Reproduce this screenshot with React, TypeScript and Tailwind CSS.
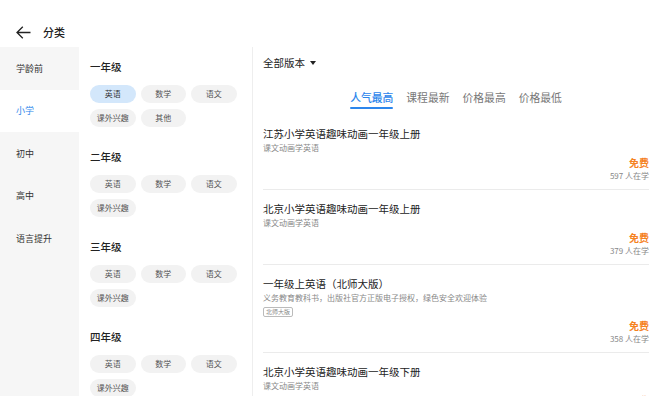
import React from "react";

const font = { fontFamily: '"Noto Sans CJK SC", "Noto Sans", sans-serif' };

const stages = ["学龄前", "小学", "初中", "高中", "语言提升"];

const grades = [
  { name: "一年级", subjects: ["英语", "数学", "语文", "课外兴趣", "其他"] },
  { name: "二年级", subjects: ["英语", "数学", "语文", "课外兴趣"] },
  { name: "三年级", subjects: ["英语", "数学", "语文", "课外兴趣"] },
  { name: "四年级", subjects: ["英语", "数学", "语文", "课外兴趣"] },
];

const tabs = ["人气最高", "课程最新", "价格最高", "价格最低"];

const courses = [
  { title: "江苏小学英语趣味动画一年级上册", desc: "课文动画学英语", count: 597 },
  { title: "北京小学英语趣味动画一年级上册", desc: "课文动画学英语", count: 379 },
  {
    title: "一年级上英语（北师大版）",
    desc: "义务教育教科书，出版社官方正版电子授权，绿色安全欢迎体验",
    tag: "北师大版",
    count: 358,
  },
  { title: "北京小学英语趣味动画一年级下册", desc: "课文动画学英语", count: 412 },
];

const App = () => {
  return (
    <div
      className="w-[660px] h-[396px] overflow-hidden bg-white flex flex-col text-[#222]"
      style={font}
    >
      <div className="h-[47px] shrink-0 flex items-center pl-[16px] pt-[17px]">
        <svg width="15" height="13" viewBox="0 0 15 13" fill="none" stroke="#222" strokeWidth="1.3">
          <path d="M14.5 6.5H1M6.8 0.8L1 6.5l5.8 5.7" />
        </svg>
        <span className="ml-[12px] text-[11px] font-medium">分类</span>
      </div>

      <div className="flex flex-1 min-h-0">
        <div className="w-[79px] shrink-0 bg-[#f6f6f6]">
          {stages.map((s) => (
            <div
              key={s}
              className={`h-[42.5px] flex items-center pl-[16px] text-[9px] ${
                s === "小学" ? "bg-white text-[#2d86ec]" : "text-[#333]"
              }`}
            >
              {s}
            </div>
          ))}
        </div>

        <div className="w-[174px] shrink-0 border-r border-[#eeeeee] pl-[11px] pt-[11px]">
          {grades.map((g, gi) => (
            <div key={g.name} className="mb-[21px]">
              <div className="text-[10.5px] leading-[18px] font-medium text-[#222]">{g.name}</div>
              <div className="mt-[9px] flex flex-wrap gap-x-[5px] gap-y-[6px] w-[160px]">
                {g.subjects.map((sub, si) => (
                  <div
                    key={sub}
                    className={`w-[45.5px] h-[18px] rounded-full flex items-center justify-center text-[8px] ${
                      gi === 0 && si === 0
                        ? "bg-[#d3e7fb] text-[#333]"
                        : "bg-[#f2f2f2] text-[#555]"
                    }`}
                  >
                    {sub}
                  </div>
                ))}
              </div>
            </div>
          ))}
        </div>

        <div className="flex-1 min-w-0 pl-[10px] pr-[11px]">
          <div className="pt-[8px] flex items-center text-[10.5px] leading-[16px]">
            <span>全部版本</span>
            <svg className="ml-[5px]" width="6" height="4" viewBox="0 0 6 4">
              <path d="M0 0h6L3 4z" fill="#222" />
            </svg>
          </div>
          <div className="flex justify-center gap-x-[13px] mt-[19px]">
            {tabs.map((t, i) => (
              <div key={t} className="flex flex-col items-center">
                <span
                  className={`text-[10.8px] leading-[14px] ${
                    i === 0 ? "text-[#2d86ec] font-medium" : "text-[#777]"
                  }`}
                >
                  {t}
                </span>
                <div
                  className={`mt-[3px] h-[2px] w-full rounded-full ${i === 0 ? "bg-[#2d86ec]" : "bg-transparent"}`}
                />
              </div>
            ))}
          </div>

          <div className="mt-[6px]">
            {courses.map((c) => (
              <div key={c.title} className="border-b border-[#ebebeb] pt-[11px] pb-[7px]">
                <div className="text-[10.5px] leading-[15px] text-[#222]">{c.title}</div>
                <div className="text-[8px] leading-[13px] text-[#888]">{c.desc}</div>
                {c.tag && (
                  <div className="mt-[3px] w-fit flex items-center h-[10px] px-[2px] border border-[#bbb] rounded-[2px] text-[6px] leading-[8px] text-[#888]">
                    {c.tag}
                  </div>
                )}
                <div className="mt-[2px] text-right text-[10px] leading-[14px] font-bold text-[#f5821f]">免费</div>
                <div className="text-right text-[8px] leading-[12px] text-[#888]">{c.count} 人在学</div>
              </div>
            ))}
          </div>
        </div>
      </div>
    </div>
  );
};

export default App;
